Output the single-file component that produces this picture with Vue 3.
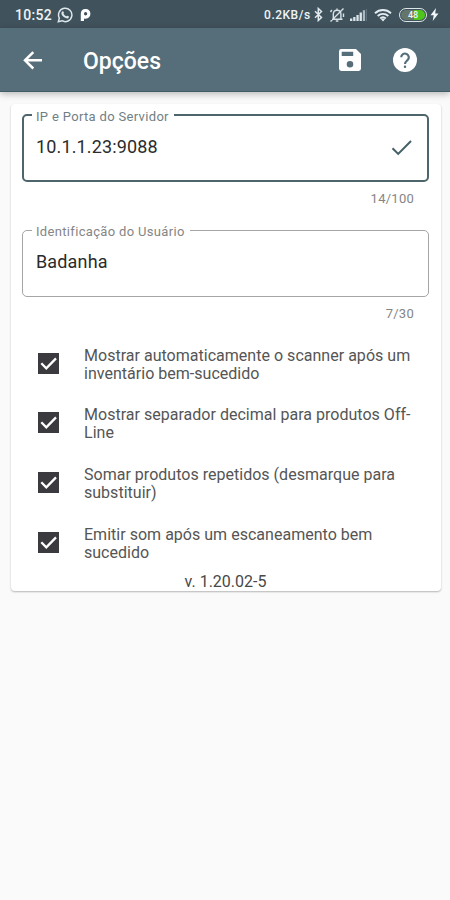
<script setup>
const options = [
  ['Mostrar automaticamente o scanner após um', 'inventário bem-sucedido'],
  ['Mostrar separador decimal para produtos Off-', 'Line'],
  ['Somar produtos repetidos (desmarque para', 'substituir)'],
  ['Emitir som após um escaneamento bem', 'sucedido'],
]
</script>

<template>
  <div class="screen">
    <div class="status">
      <span class="time">10:52</span>
      <svg class="whats" width="16" height="16" viewBox="0 0 24 24">
        <path d="M2 22l1.500-5.400A10 10 0 1 1 7.400 20.600z" fill="none" stroke="#dde7ec" stroke-width="2.200" />
        <path d="M8.300 6.500c.8-.5 1.300 0 1.600.9l.5 1.200c.2.600-.8 1.200-.6 1.600 1 1.900 2.200 3 4.100 3.800.5.200 1.100-1.200 1.700-1l2 1c.6.4.1 2.100-.8 2.700-1.400.9-3.400.4-5.400-.8-2.300-1.400-4.600-4-4.800-6.200-.1-1.200.7-2.500 1.700-3.200z" fill="#dde7ec" />
      </svg>
      <svg class="pmark" width="11" height="14" viewBox="0 0 11 14">
        <path fill-rule="evenodd" d="M5.500 1C2.500 1 .8 2.900.8 5.500V13H4v-2.600c.5.200 1 .3 1.700.3 2.800 0 4.700-2 4.700-4.900C10.400 3 8.400 1 5.500 1zM5.600 4.100a1.600 1.600 0 1 1 0 3.300 1.600 1.600 0 0 1 0-3.300z" fill="#fff" />
      </svg>
      <span class="speed">0.2KB/s</span>
      <svg class="bt" width="9" height="15" viewBox="0 0 9 15">
        <path d="M1 4.200l6.500 6.300-3.200 3V1.500l3.200 3L1 10.800" fill="none" stroke="#e0e9ed" stroke-width="1.500" />
      </svg>
      <svg class="bell" width="16" height="16" viewBox="0 0 16 16">
        <path d="M3 12.200h10.500M4.300 12V7.200c0-2.400 1.400-4 3.800-4s3.800 1.600 3.800 4V12M6.800 14h2.600M1.500 14.500l13-13M8 1.500v1.500M1.500 5l1.300-2M14.500 6.500V10" fill="none" stroke="#d6e0e5" stroke-width="1.400" />
      </svg>
      <svg class="signal" width="17" height="12" viewBox="0 0 17 12">
        <path d="M0 9.500h2.300V12H0zM3.200 8h2.300v4H3.200zM6.400 6h2.300v6H6.400zM9.600 3.500h2.300V12H9.600z" fill="#dce6ea" />
        <path d="M12.800 1.200h2.300V12h-2.300z" fill="#aab9c1" />
        <path d="M16 0h.8v12H16z" fill="#667a84" />
      </svg>
      <svg class="wifi" width="18" height="14" viewBox="0 0 18 14">
        <path d="M1 5.200c4.600-4.200 11.400-4.200 16 0M3.700 8c3-2.800 7.600-2.800 10.600 0M6.200 10.500c1.600-1.500 4-1.500 5.600 0" fill="none" stroke="#e3ecf0" stroke-width="1.900" />
        <path d="M7 11.200c1.200-.9 2.800-.9 4 0L9 13.600z" fill="#e3ecf0" />
      </svg>
      <span class="battery"><span class="level">48</span></span>
      <svg class="bolt" width="9" height="13" viewBox="0 0 9 13">
        <path d="M6 0L.5 7.200h3.200L2.700 13l5.800-7.500H5.200z" fill="#f1f6f8" />
      </svg>
    </div>

    <header class="appbar">
      <svg class="back" width="20" height="20" viewBox="0 0 20 20">
        <path d="M19 10.300H2.500M10.300 2.100L2 10.300l8.300 8.200" fill="none" stroke="#fff" stroke-width="2.500" />
      </svg>
      <h1>Opções</h1>
      <svg class="save" width="22" height="22" viewBox="0 0 22 22">
        <path fill-rule="evenodd" d="M2.400 0H17l5 5v14.600a2.400 2.400 0 0 1-2.400 2.400H2.400A2.400 2.400 0 0 1 0 19.600V2.400A2.400 2.400 0 0 1 2.400 0zM2.700 2.800v4.300h11.500V2.800zM11 12a3.300 3.300 0 1 0 0 6.600 3.300 3.300 0 0 0 0-6.600z" fill="#fff" />
      </svg>
      <svg class="help" width="24" height="24" viewBox="0 0 24 24">
        <circle cx="12" cy="12" r="12" fill="#fff" />
        <path d="M8.200 9.300a3.800 3.800 0 1 1 6.300 2.900c-1.500 1.300-2.500 1.800-2.500 3.700" fill="none" stroke="#546e7a" stroke-width="2.200" />
        <path d="M10.900 17.600h2.200v2.300h-2.200z" fill="#546e7a" />
      </svg>
    </header>

    <main class="card">
      <fieldset class="field active">
        <legend>IP e Porta do Servidor</legend>
        <span class="value ip">10.1.1.23:9088</span>
        <svg width="22" height="18" viewBox="0 0 22 18">
          <path d="M1.500 10.200l5.700 5.700L20 3" fill="none" stroke="#455f68" stroke-width="2" />
        </svg>
      </fieldset>
      <div class="counter">14/100</div>
      <fieldset class="field">
        <legend>Identificação do Usuário</legend>
        <span class="value name">Badanha</span>
      </fieldset>
      <div class="counter second">7/30</div>

      <div class="options">
        <div v-for="(lines, i) in options" :key="i" class="option">
          <svg width="21" height="21" viewBox="0 0 21 21">
            <path d="M0 0h21v21H0z" fill="#3b3b3f" />
            <path d="M3.300 10.300l5 5L18 5.400" fill="none" stroke="#fff" stroke-width="2.300" />
          </svg>
          <p><span v-for="line in lines" :key="line">{{ line }}</span></p>
        </div>
      </div>
      <div class="version">v. 1.20.02-5</div>
    </main>
  </div>
</template>

<style>
body {
  background: #fafafa;
}
</style>

<style scoped>
.screen {
  width: 450px;
  height: 900px;
  overflow: hidden;
  background: #fafafa;
  font-family: Roboto, "Liberation Sans", sans-serif;
}
svg {
  display: block;
  flex: none;
}
.status {
  box-sizing: border-box;
  display: flex;
  align-items: center;
  height: 28px;
  padding: 1px 11px 0 15px;
  background: #40525c;
  color: #eef4f6;
  font-weight: 500;
}
.time {
  width: 43px;
  font-size: 14px;
  letter-spacing: 0.3px;
}
.pmark {
  margin-left: 7px;
}
.speed {
  width: 49px;
  margin-left: 173px;
  font-size: 12px;
  letter-spacing: 0.5px;
  white-space: nowrap;
}
.bt {
  margin-left: 2px;
}
.bell {
  margin-left: 6px;
}
.signal {
  margin-left: 5px;
}
.wifi {
  margin-left: 7px;
}
.battery {
  box-sizing: border-box;
  flex: none;
  width: 28px;
  height: 14px;
  margin-left: 7px;
  padding: 1px;
  border: 1.500px solid #dce5e9;
  border-radius: 7px;
}
.level {
  display: block;
  height: 10px;
  border-radius: 5px;
  background: linear-gradient(90deg, #64756b 0 55%, #4fc51c 55%);
  font-size: 9px;
  line-height: 10px;
  text-align: center;
}
.bolt {
  margin-left: 3px;
}
.appbar {
  box-sizing: border-box;
  display: flex;
  align-items: center;
  height: 64px;
  padding: 1px 33px 0 23px;
  border-bottom: 1px solid #405c66;
  background: #566e79;
  box-shadow: 0 2px 7px rgba(0, 0, 0, 0.27);
}
h1 {
  width: 256px;
  margin: 0 0 0 40px;
  padding-top: 4px;
  color: #fff;
  font-size: 23px;
  font-weight: 500;
  line-height: 30px;
}
.help {
  margin-left: 32px;
}
.card {
  box-sizing: border-box;
  width: 430px;
  height: 487px;
  margin: 12px 0 0 11px;
  padding: 3px 12px 0 11px;
  border-radius: 4px;
  background: #fff;
  box-shadow: 0 1px 2px rgba(0, 0, 0, 0.28);
}
.field {
  box-sizing: border-box;
  display: flex;
  align-items: center;
  justify-content: space-between;
  width: 407px;
  height: 75px;
  min-width: 0;
  margin: 0;
  padding: 0 17px 10px 13px;
  border: 1px solid #a5a5a5;
  border-radius: 5px;
}
.active {
  padding: 0 14px 10px 12px;
  border: 2px solid #4e666b;
}
legend {
  box-sizing: border-box;
  height: 16px;
  margin-left: -4px;
  padding: 2px 5px 0 4px;
  color: #858585;
  font-size: 13px;
  line-height: 16px;
  letter-spacing: 0.330px;
}
.active legend {
  color: #6f7f85;
}
.value {
  color: #2b2b2b;
  font-size: 18px;
  line-height: 24px;
  letter-spacing: 0.150px;
}
.counter {
  margin: 9px 15px 0 0;
  color: #858585;
  font-size: 13px;
  line-height: 16px;
  letter-spacing: 0.250px;
  text-align: right;
}
.counter + .field {
  margin-top: 15px;
}
.options {
  margin-top: 23px;
}
.option {
  display: flex;
  align-items: center;
  height: 36px;
  margin-bottom: 23.700px;
  padding-left: 16px;
}
.option p {
  margin: 0 0 0 25px;
  padding-top: 3px;
  color: #555;
  font-size: 16px;
  line-height: 18px;
  letter-spacing: 0.020px;
  white-space: nowrap;
}
.option p span {
  display: block;
}
.version {
  margin-top: -11px;
  color: #484848;
  font-size: 16px;
  line-height: 18px;
  text-align: center;
}
</style>
